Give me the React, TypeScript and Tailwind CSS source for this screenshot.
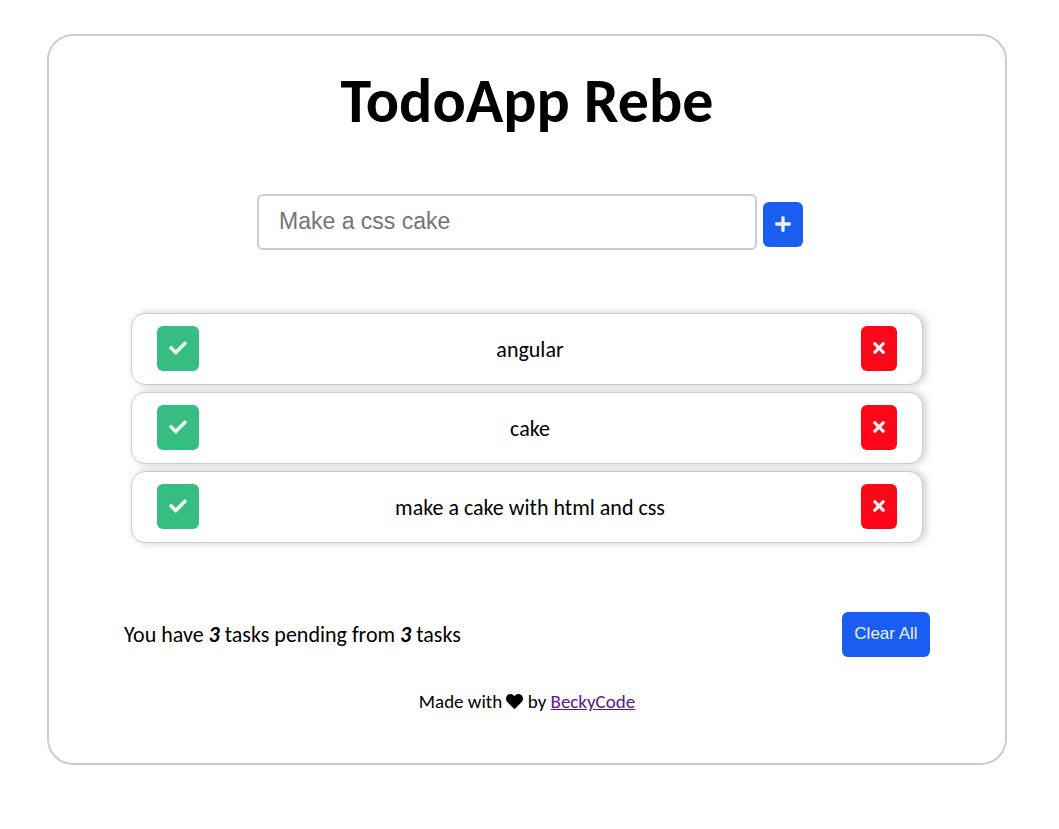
import { useState, type FormEvent } from "react";
import { FaCheck, FaHeart, FaPlus, FaTimes } from "react-icons/fa";

type Todo = { id: number; name: string; done: boolean };

const initialTodos: Todo[] = [
  { id: 1, name: "angular", done: false },
  { id: 2, name: "cake", done: false },
  { id: 3, name: "make a cake with html and css", done: false },
];

const buttonBase =
  "h-[45px] shrink-0 cursor-pointer rounded-md px-3 pb-[2px] text-[#f0f0f0]";

function TodoRow({
  todo,
  onToggle,
  onRemove,
}: {
  todo: Todo;
  onToggle: () => void;
  onRemove: () => void;
}) {
  return (
    <li className="flex h-[72px] items-start justify-between rounded-[14px] border border-[#ccc] bg-white px-[25px] pt-3 shadow-[3px_0px_7px_1px_rgba(0,0,0,0.16)]">
      <button
        type="button"
        aria-label={`Complete ${todo.name}`}
        onClick={onToggle}
        className={`${buttonBase} w-[42px] bg-[#35bd82]`}
      >
        <FaCheck className="size-[18px]" />
      </button>
      <span
        className={`text-[22px] leading-[47px] ${todo.done ? "line-through" : ""}`}
      >
        {todo.name}
      </span>
      <button
        type="button"
        aria-label={`Delete ${todo.name}`}
        onClick={onRemove}
        className={`${buttonBase} w-9 bg-[#ff0518]`}
      >
        <FaTimes className="h-[18px] w-3" />
      </button>
    </li>
  );
}

export default function App() {
  const [todos, setTodos] = useState(initialTodos);
  const [draft, setDraft] = useState("");
  const pending = todos.filter((t) => !t.done).length;

  const addTodo = (e: FormEvent) => {
    e.preventDefault();
    if (!draft.trim()) return;
    setTodos([...todos, { id: Date.now(), name: draft.trim(), done: false }]);
    setDraft("");
  };

  return (
    <div className="bg-white pt-[34px] pr-[52px] pb-16 pl-[47px] font-['Calibri','Carlito','Lato',sans-serif] text-black">
      <main className="rounded-[26px] border-2 border-[#ccc] px-[75px] pt-[29px] pb-[49px]">
        <h1 className="text-center text-[62px] leading-[72px] font-bold">
          TodoApp Rebe
        </h1>

        <form
          onSubmit={addTodo}
          className="mt-[57px] flex items-start justify-center gap-[6px] pl-[6px]"
        >
          <input
            type="text"
            aria-label="New task"
            placeholder="Make a css cake"
            value={draft}
            onChange={(e) => setDraft(e.target.value)}
            className="h-14 w-full max-w-[500px] rounded-md border-2 border-[#ccc] px-5 pb-[2px] font-['Liberation_Sans',sans-serif] text-[23px] placeholder:text-[#757575]"
          />
          <button
            type="submit"
            aria-label="Add task"
            className={`${buttonBase} mt-2 w-10 bg-[#195df3]`}
          >
            <FaPlus className="h-[18px] w-4" />
          </button>
        </form>

        <ul className="mx-[7px] mt-[63px] flex flex-col gap-[7px]">
          {todos.map((todo) => (
            <TodoRow
              key={todo.id}
              todo={todo}
              onToggle={() =>
                setTodos(
                  todos.map((t) =>
                    t.id === todo.id ? { ...t, done: !t.done } : t,
                  ),
                )
              }
              onRemove={() => setTodos(todos.filter((t) => t.id !== todo.id))}
            />
          ))}
        </ul>

        <div className="mt-[69px] flex items-center justify-between">
          <p className="text-[22px] leading-6">
            You have <b className="italic">{pending}</b> tasks pending from{" "}
            <b className="italic">{todos.length}</b> tasks
          </p>
          <button
            type="button"
            onClick={() => setTodos([])}
            className={`${buttonBase} w-[88px] bg-[#195df3] font-['Liberation_Sans',sans-serif] text-[17px]`}
          >
            Clear All
          </button>
        </div>

        <footer className="mt-[33px] text-center text-[19px] leading-6">
          Made with{" "}
          <FaHeart
            role="img"
            aria-label="love"
            className="inline size-[17px] align-[-2px]"
          />{" "}
          by{" "}
          <a href="#beckycode" className="text-[#551a8b] underline">
            BeckyCode
          </a>
        </footer>
      </main>
    </div>
  );
}
